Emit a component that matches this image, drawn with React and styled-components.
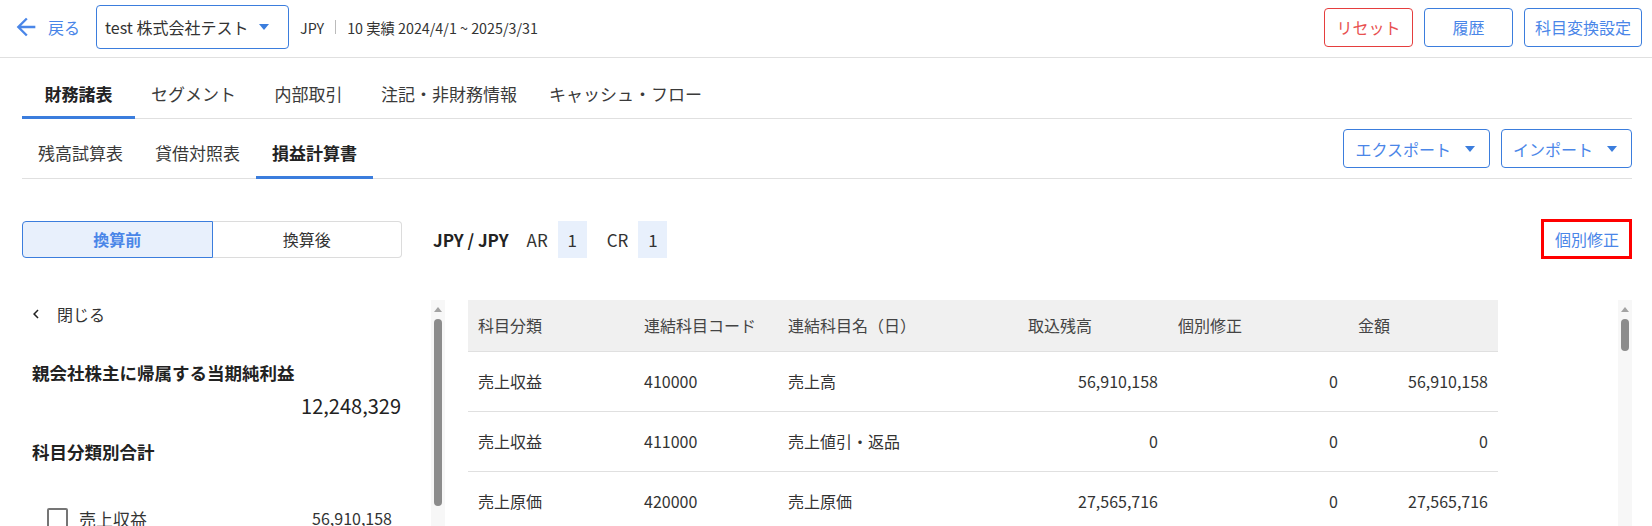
import React from 'react';
import styled, { createGlobalStyle, css } from 'styled-components';

const BLUE = '#3b7ddd';
const BLUE_TEXT = '#4a86e8';
const RED = '#e53e3e';
const LINE = '#e0e0e0';
const TEXT = '#333';

const GlobalStyle = createGlobalStyle`
	body {
		margin: 0;
		background: #fff;
		font-family: 'Noto Sans CJK JP', 'Noto Sans', sans-serif;
		color: ${TEXT};
		overflow: hidden;
	}
	* {
		box-sizing: border-box;
	}
`;

const Page = styled.div`
	width: 1652px;
	height: 526px;
	overflow: hidden;
`;

const Header = styled.header`
	display: flex;
	align-items: center;
	height: 58px;
	padding: 0 10px 3px 12px;
	border-bottom: 1px solid ${LINE};
`;

const BackLink = styled.a`
	display: flex;
	align-items: center;
	gap: 8px;
	color: ${BLUE_TEXT};
	font-size: 16px;
	cursor: pointer;
`;

const CompanySelect = styled.div`
	display: flex;
	align-items: center;
	justify-content: space-between;
	width: 193px;
	height: 44px;
	margin-left: 16px;
	padding: 0 19px 0 8px;
	border: 1px solid ${BLUE};
	border-radius: 4px;
	font-size: 16px;
	color: ${TEXT};
`;

const Caret = styled.span`
	width: 0;
	height: 0;
	border-left: 5px solid transparent;
	border-right: 5px solid transparent;
	border-top: 6px solid ${BLUE};
`;

const PeriodInfo = styled.div`
	display: flex;
	align-items: center;
	margin-left: 11px;
	font-size: 14.3px;
	color: ${TEXT};
`;

const Divider = styled.span`
	width: 1px;
	height: 14px;
	margin: 0 11px;
	background: #bbb;
`;

const HeaderActions = styled.div`
	display: flex;
	gap: 11px;
	margin-left: auto;
`;

const OutlineButton = styled.button`
	min-width: 89px;
	height: 39px;
	padding: 0 10px;
	background: #fff;
	border: 1px solid ${BLUE};
	border-radius: 4px;
	font-family: inherit;
	font-size: 16px;
	color: ${BLUE_TEXT};
	${(p) =>
		p.$danger &&
		css`
			border-color: ${RED};
			color: #e85050;
		`}
`;

const Content = styled.div`
	padding: 0 20px 0 22px;
`;

const TabList = styled.div`
	display: flex;
	margin-top: 13px;
	border-bottom: 1px solid ${LINE};
`;

const Tab = styled.div`
	display: flex;
	align-items: center;
	justify-content: center;
	height: ${(p) => (p.$sub ? '50px' : '48px')};
	min-width: ${(p) => (p.$sub ? '0' : '113px')};
	padding: 0 16px;
	font-size: 17px;
	color: #3a3a3a;
	border-bottom: 3px solid transparent;
	margin-bottom: -1px;
	${(p) =>
		p.$active &&
		css`
			font-weight: 700;
			color: #222;
			border-bottom-color: ${BLUE};
		`}
`;

const SubRow = styled.div`
	display: flex;
	justify-content: space-between;
	align-items: flex-start;
	margin-top: 10px;
	border-bottom: 1px solid ${LINE};
`;

const SubTabs = styled.div`
	display: flex;
`;

const DropActions = styled.div`
	display: flex;
	gap: 11px;
`;

const DropButton = styled.button`
	display: flex;
	align-items: center;
	gap: 14px;
	height: 39px;
	padding: 0 14px 0 11px;
	background: #fff;
	border: 1px solid ${BLUE};
	border-radius: 4px;
	font-family: inherit;
	font-size: 16px;
	color: ${BLUE_TEXT};
`;

const ToggleRow = styled.div`
	display: flex;
	align-items: center;
	margin-top: 40px;
`;

const Segmented = styled.div`
	display: flex;
	width: 380px;
`;

const SegmentButton = styled.div`
	flex: 1;
	display: flex;
	align-items: center;
	justify-content: center;
	height: 37px;
	font-size: 16px;
	border: 1px solid #dcdcdc;
	border-left: none;
	border-radius: 0 4px 4px 0;
	color: ${TEXT};
	${(p) =>
		p.$active &&
		css`
			border: 1px solid ${BLUE};
			border-radius: 4px 0 0 4px;
			background: #e8f0fc;
			color: ${BLUE_TEXT};
			font-weight: 700;
		`}
`;

const RateInfo = styled.div`
	display: flex;
	align-items: center;
	margin-left: 31px;
	font-size: 17px;
	color: ${TEXT};
`;

const Pair = styled.span`
	font-weight: 700;
	color: #222;
	margin-right: 18px;
`;

const RateLabel = styled.span`
	margin-right: 10px;
`;

const RateValue = styled.span`
	display: flex;
	align-items: center;
	justify-content: center;
	width: 29px;
	height: 37px;
	margin-right: 20px;
	background: #e8f0fc;
`;

const EditLink = styled.a`
	margin-left: auto;
	display: flex;
	align-items: center;
	height: 40px;
	padding: 0 10px 0 11px;
	border: 3px solid #ff0000;
	font-size: 16px;
	color: ${BLUE_TEXT};
`;

const Main = styled.div`
	display: flex;
	gap: 23px;
	margin-top: 41px;
`;

const SidePanel = styled.aside`
	display: flex;
	width: 423px;
	flex-shrink: 0;
`;

const SideBody = styled.div`
	flex: 1;
	padding: 0 30px 0 10px;
`;

const CloseRow = styled.div`
	display: flex;
	align-items: center;
	gap: 12px;
	height: 28px;
	margin-left: -5px;
	font-size: 16px;
	color: ${TEXT};
`;

const SummaryTitle = styled.div`
	margin-top: 32px;
	font-size: 17.5px;
	line-height: 26px;
	font-weight: 700;
	color: #222;
`;

const SummaryValue = styled.div`
	margin-top: 6px;
	text-align: right;
	font-size: 20px;
	line-height: 28px;
	color: #222;
`;

const SectionTitle = styled(SummaryTitle)`
	margin-top: 19px;
`;

const CheckRow = styled.div`
	display: flex;
	align-items: center;
	height: 28px;
	margin-top: 39px;
	padding: 0 9px 0 15px;
`;

const CheckBox = styled.span`
	width: 21px;
	height: 21px;
	border: 2px solid #757575;
	border-radius: 2px;
`;

const CheckLabel = styled.span`
	margin-left: 11px;
	font-size: 17px;
	color: ${TEXT};
`;

const CheckAmount = styled.span`
	margin-left: auto;
	font-size: 16px;
	color: ${TEXT};
`;

const ScrollTrack = styled.div`
	display: flex;
	flex-direction: column;
	align-items: center;
	width: 14px;
	height: 240px;
	background: #f7f7f7;
	flex-shrink: 0;
`;

const ScrollArrow = styled.span`
	margin-top: 7px;
	width: 0;
	height: 0;
	border-left: 4px solid transparent;
	border-right: 4px solid transparent;
	border-bottom: 5px solid #a3a3a3;
`;

const ScrollThumb = styled.span`
	margin-top: 7px;
	width: 8px;
	height: ${(p) => p.$size}px;
	border-radius: 4px;
	background: #8c8c8c;
`;

const TablePanel = styled.section`
	flex: 1;
	display: flex;
	justify-content: space-between;
`;

const Table = styled.table`
	width: 1030px;
	border-collapse: collapse;
	table-layout: fixed;
	align-self: flex-start;
`;

const Th = styled.th`
	height: 51px;
	padding: 0 10px;
	background: #f0f0f0;
	border-bottom: 1px solid ${LINE};
	text-align: left;
	font-weight: 400;
	font-size: 16px;
	color: #444;
`;

const Td = styled.td`
	height: 60px;
	padding: 0 10px;
	border-bottom: 1px solid ${LINE};
	text-align: ${(p) => (p.$num ? 'right' : 'left')};
	font-size: 16px;
	color: ${TEXT};
`;

const columns = [
	{ label: '科目分類', width: 166 },
	{ label: '連結科目コード', width: 144 },
	{ label: '連結科目名（日）', width: 240 },
	{ label: '取込残高', width: 150 },
	{ label: '個別修正', width: 180 },
	{ label: '金額', width: 150 },
];

const rows = [
	['売上収益', '410000', '売上高', '56,910,158', '0', '56,910,158'],
	['売上収益', '411000', '売上値引・返品', '0', '0', '0'],
	['売上原価', '420000', '売上原価', '27,565,716', '0', '27,565,716'],
];

const topTabs = ['財務諸表', 'セグメント', '内部取引', '注記・非財務情報', 'キャッシュ・フロー'];
const subTabs = ['残高試算表', '貸借対照表', '損益計算書'];

function ArrowBack() {
	return (
		<svg width="28" height="28" viewBox="0 0 24 24" fill={BLUE_TEXT}>
			<path d="M20 11H7.83l5.59-5.59L12 4l-8 8 8 8 1.41-1.41L7.83 13H20v-2z" />
		</svg>
	);
}

function ChevronLeft() {
	return (
		<svg width="18" height="18" viewBox="0 0 24 24" fill="#222">
			<path d="M15.41 7.41L14 6l-6 6 6 6 1.41-1.41L10.83 12z" />
		</svg>
	);
}

export default function App() {
	return (
		<Page>
			<GlobalStyle />
			<Header>
				<BackLink>
					<ArrowBack />
					戻る
				</BackLink>
				<CompanySelect>
					test 株式会社テスト
					<Caret />
				</CompanySelect>
				<PeriodInfo>
					JPY
					<Divider />
					10 実績 2024/4/1 ~ 2025/3/31
				</PeriodInfo>
				<HeaderActions>
					<OutlineButton $danger>リセット</OutlineButton>
					<OutlineButton>履歴</OutlineButton>
					<OutlineButton>科目変換設定</OutlineButton>
				</HeaderActions>
			</Header>

			<Content>
				<TabList>
					{topTabs.map((t, i) => (
						<Tab key={t} $active={i === 0}>
							{t}
						</Tab>
					))}
				</TabList>

				<SubRow>
					<SubTabs>
						{subTabs.map((t, i) => (
							<Tab key={t} $sub $active={i === 2}>
								{t}
							</Tab>
						))}
					</SubTabs>
					<DropActions>
						<DropButton>
							エクスポート
							<Caret />
						</DropButton>
						<DropButton>
							インポート
							<Caret />
						</DropButton>
					</DropActions>
				</SubRow>

				<ToggleRow>
					<Segmented>
						<SegmentButton $active>換算前</SegmentButton>
						<SegmentButton>換算後</SegmentButton>
					</Segmented>
					<RateInfo>
						<Pair>JPY / JPY</Pair>
						<RateLabel>AR</RateLabel>
						<RateValue>1</RateValue>
						<RateLabel>CR</RateLabel>
						<RateValue>1</RateValue>
					</RateInfo>
					<EditLink>個別修正</EditLink>
				</ToggleRow>

				<Main>
					<SidePanel>
						<SideBody>
							<CloseRow>
								<ChevronLeft />
								閉じる
							</CloseRow>
							<SummaryTitle>親会社株主に帰属する当期純利益</SummaryTitle>
							<SummaryValue>12,248,329</SummaryValue>
							<SectionTitle>科目分類別合計</SectionTitle>
							<CheckRow>
								<CheckBox />
								<CheckLabel>売上収益</CheckLabel>
								<CheckAmount>56,910,158</CheckAmount>
							</CheckRow>
						</SideBody>
						<ScrollTrack>
							<ScrollArrow />
							<ScrollThumb $size={187} />
						</ScrollTrack>
					</SidePanel>

					<TablePanel>
						<Table>
							<colgroup>
								{columns.map((c) => (
									<col key={c.label} style={{ width: c.width }} />
								))}
							</colgroup>
							<thead>
								<tr>
									{columns.map((c) => (
										<Th key={c.label}>{c.label}</Th>
									))}
								</tr>
							</thead>
							<tbody>
								{rows.map((r, i) => (
									<tr key={i}>
										{r.map((v, j) => (
											<Td key={j} $num={j >= 3}>
												{v}
											</Td>
										))}
									</tr>
								))}
							</tbody>
						</Table>
						<ScrollTrack>
							<ScrollArrow />
							<ScrollThumb $size={32} />
						</ScrollTrack>
					</TablePanel>
				</Main>
			</Content>
		</Page>
	);
}
